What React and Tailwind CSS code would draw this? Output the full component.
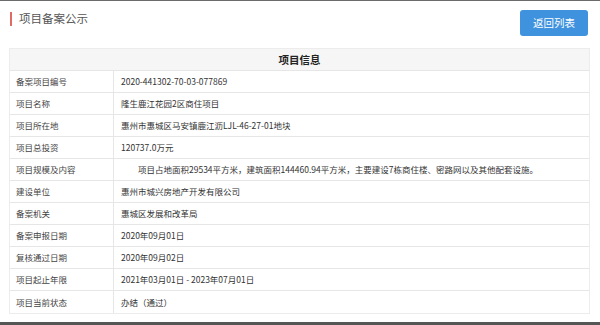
const rows = [
  ["备案项目编号", "2020-441302-70-03-077869"],
  ["项目名称", "隆生鹿江花园2区商住项目"],
  ["项目所在地", "惠州市惠城区马安镇鹿江沥LJL-46-27-01地块"],
  ["项目总投资", "120737.0万元"],
  [
    "项目规模及内容",
    "\u3000\u3000项目占地面积29534平方米，建筑面积144460.94平方米，主要建设7栋商住楼、密路网以及其他配套设施。",
  ],
  ["建设单位", "惠州市城兴房地产开发有限公司"],
  ["备案机关", "惠城区发展和改革局"],
  ["备案申报日期", "2020年09月01日"],
  ["复核通过日期", "2020年09月02日"],
  ["项目起止年限", "2021年03月01日 - 2023年07月01日"],
  ["项目当前状态", "办结（通过）"],
];

const App = () => {
  return (
    <div
      className="w-[600px] h-[325px] bg-white flex flex-col overflow-hidden"
      style={{ fontFamily: '"Noto Sans CJK SC", "Noto Sans", sans-serif' }}
    >
      <div className="h-px bg-[#6b6b6b]" />

      {/* page header */}
      <div className="flex items-start justify-between pt-[9px] pl-[10px] pr-[12px]">
        <div className="flex items-center gap-[7px] mt-[2px]">
          <span className="w-[2px] h-[14px] bg-[#e06b64]" />
          <span className="text-[11.5px] text-[#555] leading-none">项目备案公示</span>
        </div>
        <button className="w-[68px] h-[26px] rounded-[3px] bg-[#3e92de] text-white text-[10.5px] leading-none">
          返回列表
        </button>
      </div>

      {/* info table */}
      <div className="mt-[12px] mx-[9px] w-[581px] border border-[#ececec] text-[8.5px] text-[#333]">
        <div className="h-[22px] flex items-center justify-center bg-[#f6f6f6] border-b border-[#e6e6e6] font-bold text-[10.5px] text-[#222]">
          项目信息
        </div>
        {rows.map(([label, value], i) => (
          <div
            key={label}
            className={
              "grid grid-cols-[104px_1fr] h-[22px] " +
              (i < rows.length - 1 ? "border-b border-[#e6e6e6]" : "")
            }
          >
            <div className="flex items-center pl-[6px] border-r border-[#e6e6e6] text-[#444]">
              {label}
            </div>
            <div className="flex items-center pl-[7px] whitespace-nowrap">{value}</div>
          </div>
        ))}
      </div>

      <div className="flex-1" />
      <div className="h-[3px] bg-[#555]" />
    </div>
  );
};

export default App;
